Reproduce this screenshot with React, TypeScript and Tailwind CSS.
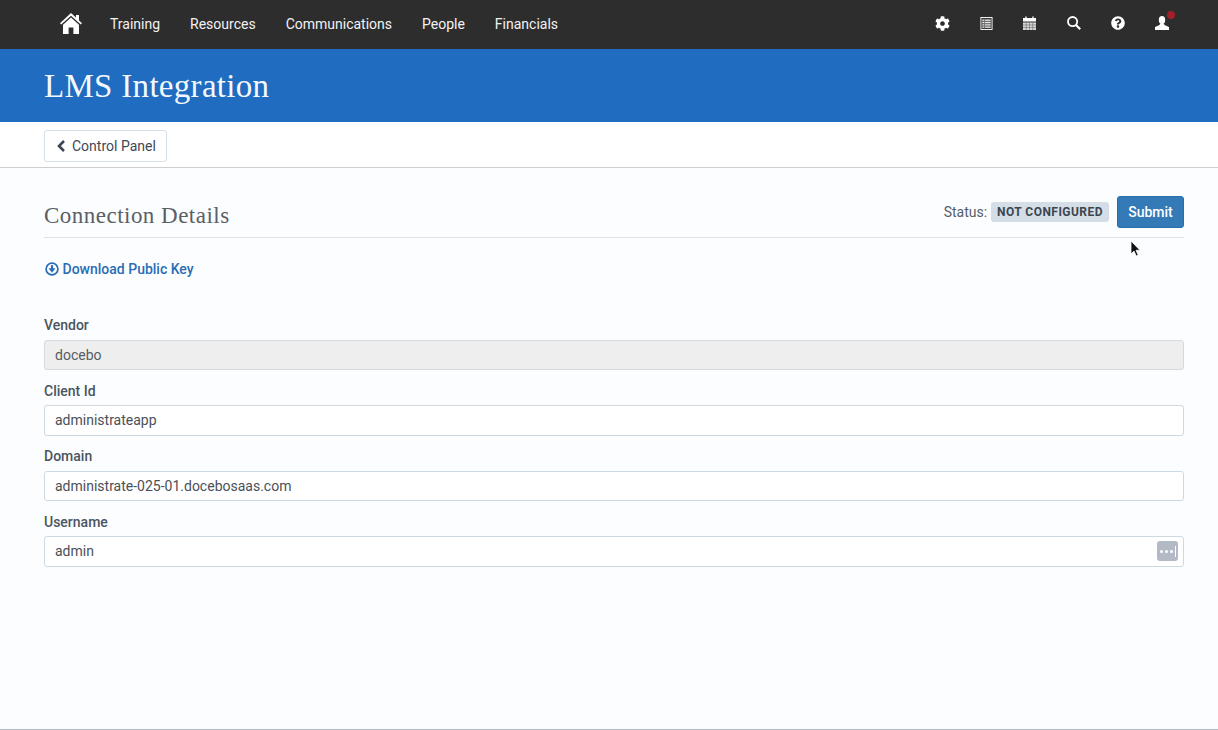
import { FaCog, FaQuestionCircle } from "react-icons/fa";

const navLinks = ["Training", "Resources", "Communications", "People", "Financials"];

function HomeIcon() {
  return (
    <svg viewBox="0 0 22 21" className="mr-[28px] h-[21px] w-[22px]" fill="#fff">
      <path d="M11 0 16 4.6V2h3v5.4L22 10.2 20.8 11.6 11 2.8 1.2 11.6 0 10.2Z" />
      <path d="M11 4.6 19 11.8V21H13.4V14.5H8.6V21H3V11.8Z" />
    </svg>
  );
}

function ListIcon() {
  return (
    <svg viewBox="0 0 13 14" className="size-[13px]">
      <rect x="0.5" y="0.5" width="12" height="13" fill="none" stroke="#fff" />
      <rect x="2" y="2" width="9" height="10" fill="#6f6f6f" />
      <path d="M2 3.5h2M5 3.5h6M2 6h2M5 6h6M2 8.5h2M5 8.5h6M2 11h2M5 11h6" stroke="#fff" strokeWidth="1" />
    </svg>
  );
}

function CalendarIcon() {
  return (
    <svg viewBox="0 0 13 14" className="h-[14px] w-[13px]">
      <path d="M0 2h13v3.5H0z" fill="#fff" />
      <path d="M3 0.5v2M10 0.5v2" stroke="#fff" strokeWidth="1.4" />
      <path d="M0 6.5h13V14H0z" fill="#d8d8d8" />
      <path d="M3.25 6.5V14M6.5 6.5V14M9.75 6.5V14M0 9h13M0 11.5h13" stroke="#6a6a6a" strokeWidth="0.6" />
    </svg>
  );
}

function SearchIcon() {
  return (
    <svg viewBox="0 0 14 14" className="size-[14px]" fill="none" stroke="#fff">
      <circle cx="5.6" cy="5.6" r="4.6" strokeWidth="1.8" />
      <path d="M9 9l4.2 4.2" strokeWidth="2.2" />
    </svg>
  );
}

function UserIcon() {
  return (
    <svg viewBox="0 0 14 14" className="size-[14px]" fill="#fff">
      <ellipse cx="7" cy="4" rx="3.2" ry="4" />
      <path d="M5 7.5h4l.4 1.6 4.6 2V14H0v-2.9l4.6-2Z" />
    </svg>
  );
}

function DownloadIcon() {
  return (
    <svg viewBox="0 0 14 14" className="ml-[1px] size-[14px]" fill="none" stroke="#2a6db5">
      <circle cx="7" cy="7" r="5.9" strokeWidth="1.7" />
      <path d="M7 3.2v4.4" strokeWidth="2.2" />
      <path d="M3.9 6.6h6.2L7 10.4Z" fill="#2a6db5" strokeWidth="0.4" />
    </svg>
  );
}

function Field({ label, value, disabled, dots }: { label: string; value: string; disabled?: boolean; dots?: boolean }) {
  return (
    <div className="flex flex-col">
      <label className="h-[20px] text-sm leading-[20px] font-medium text-[#4a5560]">{label}</label>
      <div
        className={
          "mt-[4.75px] flex h-[30.5px] items-center justify-between rounded-[3px] border pr-[5px] pb-[0.5px] pl-[10px] text-sm " +
          (disabled
            ? "border-[#d5dade] bg-[#eeeeee] text-[#555c63]"
            : "border-[#ccd9e3] bg-white text-[#4a5058]")
        }
      >
        <span>{value}</span>
        {dots && (
          <span className="flex h-[20px] w-[21px] items-center justify-center gap-[2px] rounded-[3px] bg-[#b4b9c6]">
            <span className="size-[3px] rounded-full bg-white" />
            <span className="size-[3px] rounded-full bg-white" />
            <span className="size-[3px] rounded-full bg-white" />
            <span className="h-[11px] w-[1px] bg-white" />
          </span>
        )}
      </div>
    </div>
  );
}

export default function App() {
  return (
    <div className="flex h-[730px] flex-col overflow-hidden bg-[#fcfdff] font-['Roboto',sans-serif]">
      <nav className="flex h-[49px] items-center bg-[#2d2d2d] pr-[49px] pb-[2px] pl-[60px] text-white">
        <HomeIcon />
        <div className="flex gap-[30px] text-sm text-[#f2f2f2]">
          {navLinks.map((l) => (
            <a key={l}>{l}</a>
          ))}
        </div>
        <div className="ml-auto flex items-center gap-[30px] pb-[1px]">
          <FaCog className="-ml-[1px] size-[15px]" />
          <ListIcon />
          <CalendarIcon />
          <span className="ml-[1px]">
            <SearchIcon />
          </span>
          <FaQuestionCircle className="size-[14px]" />
          <span className="relative">
            <UserIcon />
            <span className="absolute -top-[5px] -right-[6px] size-[8px] rounded-full bg-[#a3202a]" />
          </span>
        </div>
      </nav>

      <header className="flex h-[73px] items-center bg-[#1f6cc0] px-[44px] pt-[2px]">
        <h1 className="font-['Liberation_Serif',serif] text-[33px] tracking-[0.3px] text-[#f4f8fc]">LMS Integration</h1>
      </header>

      <div className="flex h-[46px] items-start border-b border-[#cfcfcf] bg-white px-[44px] pt-[8px]">
        <button className="flex h-[32px] items-center gap-[6px] rounded-[3px] border border-[#d6e0e8] bg-white pr-[10px] pl-[11px] text-sm text-[#3f4954]">
          <svg viewBox="0 0 10 12" className="h-[12px] w-[10px]" fill="none" stroke="#3a4652" strokeWidth="2.6">
            <path d="M8 1 3 6l5 5" />
          </svg>
          Control Panel
        </button>
      </div>

      <main className="flex-1 border-b border-[#b4bcc6] pr-[34px] pl-[44px]">
        <div>
          <div className="flex h-[70px] items-end justify-between border-b border-[#dfe3e8] pb-[8px]">
            <h2 className="font-['Liberation_Serif',serif] text-[23px] leading-[26px] tracking-[0.48px] text-[#5a5f66]">Connection Details</h2>
            <div className="mb-[1px] flex items-center">
              <span className="mr-[4px] text-sm text-[#555e68]">Status:</span>
              <span className="mr-[8px] flex h-[20px] items-center rounded-[3px] bg-[#d5dee6] px-[6px] text-xs font-bold tracking-[0.46px] text-[#3a4652]">
                NOT CONFIGURED
              </span>
              <button className="h-[32px] w-[67px] rounded-[3px] border border-[#2a6cb0] bg-[#337ab7] text-sm font-medium text-white">
                Submit
              </button>
            </div>
          </div>

          <a className="mt-[22px] flex h-[17px] items-center gap-[3.5px] text-sm font-medium text-[#2a6db5]">
            <DownloadIcon />
            Download Public Key
          </a>

          <div className="mt-[38px] flex flex-col gap-[10.25px]">
            <Field label="Vendor" value="docebo" disabled />
            <Field label="Client Id" value="administrateapp" />
            <Field label="Domain" value="administrate-025-01.docebosaas.com" />
            <Field label="Username" value="admin" dots />
          </div>
        </div>
      </main>

      <svg viewBox="0 0 12 18" className="absolute top-[240px] left-[1130px] h-[18px] w-[12px]">
        <path d="M1 1v13l3-3 2.2 5 2-.9L6 10.3h4z" fill="#111" stroke="#fff" strokeWidth="0.8" />
      </svg>
    </div>
  );
}
